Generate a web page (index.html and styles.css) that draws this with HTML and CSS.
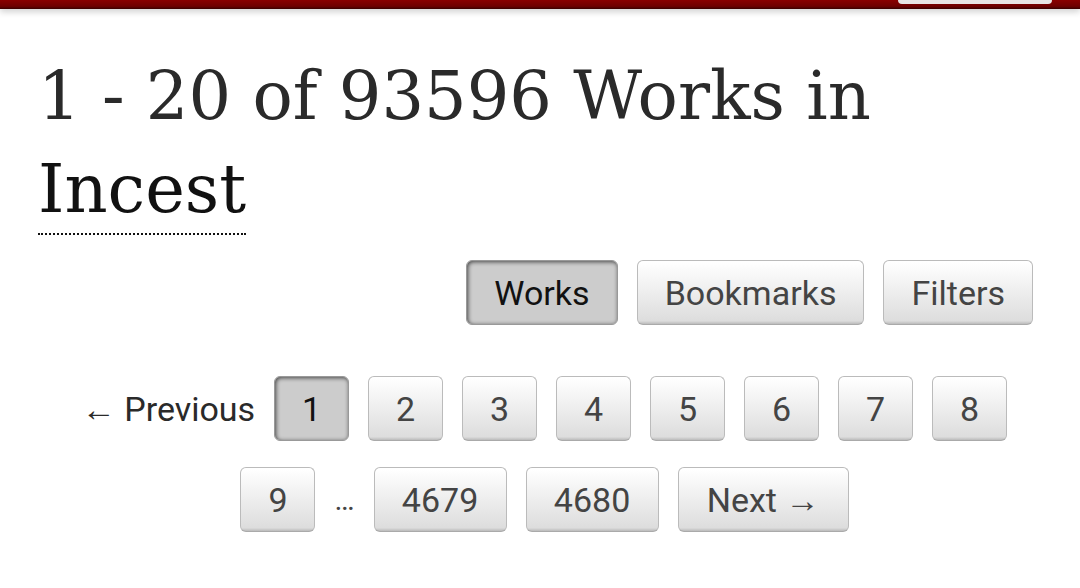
FILE: index.html
```html
<!DOCTYPE html>
<html>
<head>
<meta charset="utf-8">
<link rel="stylesheet" href="styles.css">
</head>
<body>
<div class="header">
  <div class="search"></div>
</div>
<div class="main">
  <h2 class="heading">1 - 20 of 93596 Works in <a class="tag" href="#">Incest</a></h2>
  <ul class="navigation">
    <li><span class="btn current">Works</span></li>
    <li><a class="btn" href="#">Bookmarks</a></li>
    <li><a class="btn" href="#">Filters</a></li>
  </ul>
  <ol class="pagination">
    <li class="prev">← Previous</li>
    <li><span class="btn page current">1</span></li>
    <li><a class="btn page" href="#">2</a></li>
    <li><a class="btn page" href="#">3</a></li>
    <li><a class="btn page" href="#">4</a></li>
    <li><a class="btn page" href="#">5</a></li>
    <li><a class="btn page" href="#">6</a></li>
    <li><a class="btn page" href="#">7</a></li>
    <li><a class="btn page" href="#">8</a></li>
    <li><a class="btn page" href="#">9</a></li>
    <li class="gap">…</li>
    <li><a class="btn page wide" href="#">4679</a></li>
    <li><a class="btn page wide" href="#">4680</a></li>
    <li><a class="btn next" href="#">Next →</a></li>
  </ol>
</div>
</body>
</html>
```

FILE: styles.css
```css
html, body {
  margin: 0;
  padding: 0;
  background: #fff;
}
body {
  font-family: Roboto, "Liberation Sans", sans-serif;
  color: #2a2a2a;
  overflow: hidden;
}
.header {
  height: 9px;
  background: linear-gradient(#8a0000, #6e0000 70%, #3a0000 100%);
  box-shadow: 0 3px 6px rgba(0,0,0,0.18);
  position: relative;
}
.search {
  position: absolute;
  left: 898px;
  top: 0;
  width: 154px;
  height: 4px;
  background: #e8e4e4;
  border-radius: 0 0 6px 6px;
}
.main {
  padding: 0 47px 0 38px;
}
.heading {
  font-family: "DejaVu Serif", serif;
  font-weight: normal;
  font-size: 67px;
  line-height: 93px;
  color: #2a2a2a;
  margin: 41px 0 0 0;
}
.tag {
  color: #111;
  text-decoration: none;
  border-bottom: 2px dotted #111;
  padding-bottom: 5px;
}
.navigation {
  list-style: none;
  margin: 24px 0 0 0;
  padding: 0;
  display: flex;
  justify-content: flex-end;
  gap: 19px;
}
.btn {
  display: inline-flex;
  align-items: center;
  justify-content: center;
  box-sizing: border-box;
  height: 65px;
  padding: 0 27px;
  font-size: 34px;
  color: #444;
  text-decoration: none;
  background: linear-gradient(#fff 2%, #ddd 95%, #bbb 100%);
  border: 1px solid #bbb;
  border-bottom-color: #aaa;
  border-radius: 6px;
}
.btn.current {
  background: #ccc;
  color: #111;
  border-color: #999;
  box-shadow: inset 1px 1px 4px #444;
}
.pagination {
  list-style: none;
  margin: 51px 0 0 0;
  padding: 0 0 0 18px;
  display: flex;
  flex-wrap: wrap;
  justify-content: center;
  align-items: center;
  column-gap: 19px;
  row-gap: 26px;
}
.pagination li {
  display: flex;
  align-items: center;
}
.prev {
  font-size: 34px;
  color: #2a2a2a;
}
.gap {
  font-size: 30px;
  color: #444;
}
.page {
  width: 75px;
  padding: 0;
}
.page.wide {
  width: 133px;
}
.next {
  width: 171px;
  padding: 0;
}
```
